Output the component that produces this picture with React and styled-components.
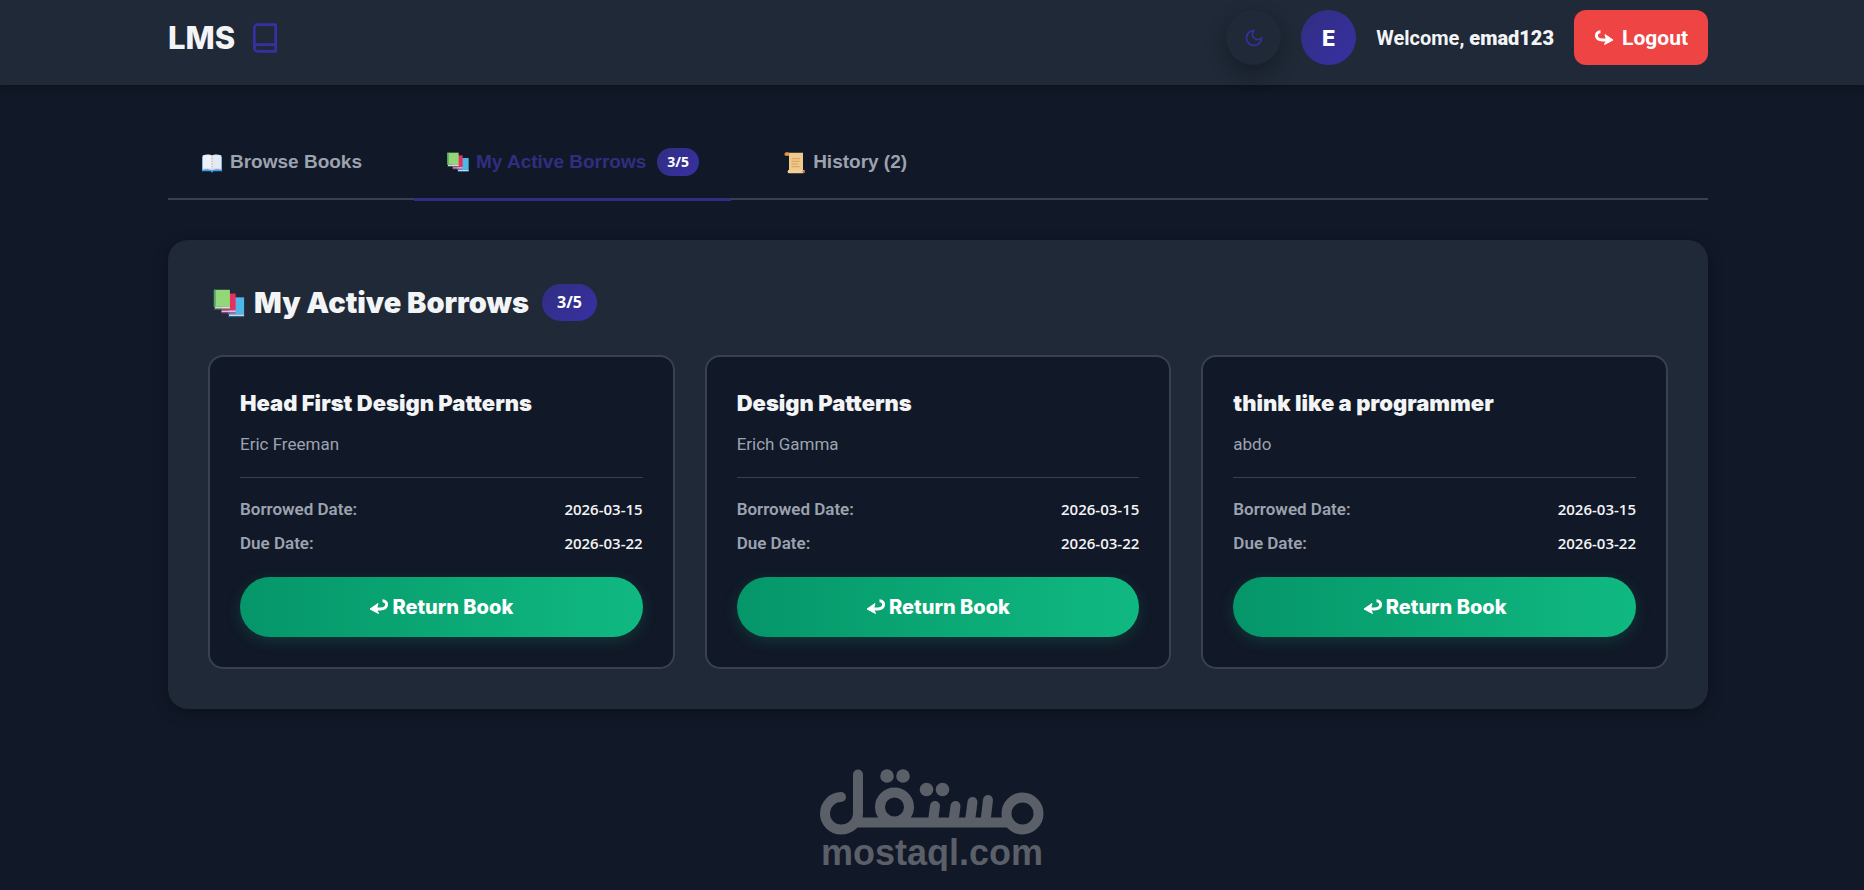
import React, { useState } from 'react'
import styled, { createGlobalStyle } from 'styled-components'

const books = [
    { title: "Head First Design Patterns", author: "Eric Freeman", borrowed: "2026-03-15", due: "2026-03-22" },
    { title: "Design Patterns", author: "Erich Gamma", borrowed: "2026-03-15", due: "2026-03-22" },
    { title: "think like a programmer", author: "abdo", borrowed: "2026-03-15", due: "2026-03-22" },
]

function BooksEmoji({size}) {
    return (
        <svg width={size} height={size} viewBox="0 0 36 36" aria-hidden="true">
            <path d="M17 12h17v18H17z" fill="#50b5e9"/>
            <path d="M17 12h2v18h-2z" fill="#2a7fc4"/>
            <path d="M18 30h16v2H18z" fill="#ccd6dd"/>
            <path d="M17 32h17v1H17z" fill="#226699"/>
            <path d="M10 8h15v18H10z" fill="#e6305f"/>
            <path d="M10 26h15v2H10z" fill="#d9c0dd"/>
            <path d="M10 28h15v1H10z" fill="#a0247c"/>
            <path d="M2 4h17v18H2z" fill="#92d878"/>
            <path d="M2 4h2v18H2z" fill="#55a36a"/>
            <path d="M3 22h16v2H3z" fill="#d5dbe0"/>
            <path d="M2 24h17v1H2z" fill="#44805a"/>
        </svg>
    )
}

function OpenBookEmoji({size}) {
    return (
        <svg width={size} height={size} viewBox="0 0 36 36" aria-hidden="true">
            <path d="M3 10h30v22H20l-2 2-2-2H3z" fill="#3b9fe0"/>
            <path d="M5 8c5-2 10-1 13 0v22c-4-2-8-2-14-1V8z" fill="#eef1f6"/>
            <path d="M31 8c-5-2-10-1-13 0v22c4-2 8-2 14-1V8z" fill="#e6e9f0"/>
            <path d="M18 8v21" stroke="#99aab5" strokeWidth="1.5" strokeDasharray="2 2"/>
            <path d="M4 29c6-1 10-1 14 1 4-2 8-2 14-1" fill="none" stroke="#ccc8e4" strokeWidth="1.5"/>
        </svg>
    )
}

function ScrollEmoji({size}) {
    return (
        <svg width={size} height={size} viewBox="0 0 36 36" aria-hidden="true">
            <path d="M5 4h25v28H9V8H5z" fill="#efca8c"/>
            <path d="M2 6c0-3 5-4 7-2v5H4c-1 0-2-1-2-3z" fill="#c07a3e"/>
            <path d="M4 6h4" stroke="#f2b75c" strokeWidth="2"/>
            <path d="M8 30h24c1 3-1 5-3 5H9c-2 0-3-3-1-5z" fill="#f2d09a"/>
            <path d="M29 31h4c1 3-1 4-3 4z" fill="#c1694f"/>
            <path d="M13 13h12M13 17h12M13 21h10M13 25h12" stroke="#d99e5c" strokeWidth="1.5"/>
        </svg>
    )
}

function HookArrow({flip}) {
    return (
        <svg width="20" height="18" viewBox="0 0 20 18" aria-hidden="true">
            <g transform={flip ? "translate(20 0) scale(-1 1)" : undefined}>
                <path d="M6 11H11.500C19.500 11 19 2.800 13.500 2.800" fill="none" stroke="currentColor" strokeWidth="3"/>
                <path d="M1 11L9 5.500L7.500 11L9.500 15.500z" fill="currentColor" stroke="currentColor" strokeWidth="1" strokeLinejoin="round"/>
            </g>
        </svg>
    )
}

function WatermarkLogo() {
    return (
        <svg width="224" height="66" viewBox="0 0 224 66" role="img" aria-label="مستقل">
            <g fill="none" stroke="currentColor" strokeWidth="10" strokeLinecap="round">
                <path d="M21 28C12 28 5 36 5 44.500C5 53 12 60.500 21 60.500C30 60.500 38 54 38 44V5.500"/>
                <circle cx="74.500" cy="38" r="14.500"/>
                <path d="M34 53.500H190" strokeLinecap="butt"/>
                <path d="M113 52l2-15M133.500 52l2-15M150 52l2.500-19M165.500 52l2.500-21"/>
                <circle cx="202.500" cy="44.500" r="16"/>
            </g>
            <g fill="currentColor">
                <circle cx="67" cy="7" r="6.800"/>
                <circle cx="83" cy="7" r="6.800"/>
                <circle cx="106.500" cy="20.500" r="6.800"/>
                <circle cx="122.500" cy="20.500" r="6.800"/>
            </g>
        </svg>
    )
}

function Header() {
    return (
        <TopBar>
            <Brand href="#">
                LMS
                <svg width="32" height="32" viewBox="0 0 24 24" fill="none" stroke="#3730a3" strokeWidth="2" strokeLinecap="round" strokeLinejoin="round" aria-hidden="true">
                    <path d="M4 19.500v-15A2.500 2.500 0 0 1 6.500 2H20v20H6.500a2.500 2.500 0 0 1 0-5H20"/>
                </svg>
            </Brand>
            <UserArea>
                <ThemeToggle aria-label="Toggle theme">
                    <svg width="20" height="20" viewBox="0 0 24 24" fill="none" stroke="currentColor" strokeWidth="2" strokeLinecap="round" strokeLinejoin="round" aria-hidden="true">
                        <path d="M12 3a6 6 0 0 0 9 9 9 9 0 1 1-9-9z"/>
                    </svg>
                </ThemeToggle>
                <Avatar>E</Avatar>
                <Welcome>Welcome, <b>emad123</b></Welcome>
                <LogoutButton><HookArrow flip/>Logout</LogoutButton>
            </UserArea>
        </TopBar>
    )
}

function BookCard({book}) {
    return (
        <Card>
            <BookTitle>{book.title}</BookTitle>
            <Author>{book.author}</Author>
            <Dates>
                <DateRow>
                    <dt>Borrowed Date:</dt>
                    <dd>{book.borrowed}</dd>
                </DateRow>
                <DateRow>
                    <dt>Due Date:</dt>
                    <dd>{book.due}</dd>
                </DateRow>
            </Dates>
            <ReturnButton><HookArrow/>Return Book</ReturnButton>
        </Card>
    )
}

function App() {
    const [tab, setTab] = useState("borrows")

    return (
        <>
            <GlobalStyle/>
            <Header/>
            <Main>
                <Tabs>
                    <Tab $active={tab==="browse"} onClick={() => setTab("browse")}>
                        <OpenBookEmoji size={24}/>
                        Browse Books
                    </Tab>
                    <Tab $active={tab==="borrows"} onClick={() => setTab("borrows")}>
                        <BooksEmoji size={24}/>
                        My Active Borrows
                        <Badge>3/5</Badge>
                    </Tab>
                    <Tab $active={tab==="history"} onClick={() => setTab("history")}>
                        <ScrollEmoji size={24}/>
                        History (2)
                    </Tab>
                </Tabs>
                <Panel>
                    <PanelTitle>
                        <BooksEmoji size={34}/>
                        My Active Borrows
                        <Badge $large>3/5</Badge>
                    </PanelTitle>
                    <Grid>
                        {books.map(book => <BookCard key={book.title} book={book}/>)}
                    </Grid>
                </Panel>
            </Main>
            <Watermark>
                <WatermarkLogo/>
                <span>mostaql.com</span>
            </Watermark>
        </>
    )
}

export default App

const GlobalStyle = createGlobalStyle`
    * {
        box-sizing: border-box;
    }

    body {
        margin: 0;
        background-color: #111827;
        color: #f3f4f6;
        font-family: Roboto, "Liberation Sans", sans-serif;
    }

    button {
        font-family: inherit;
        border: none;
        cursor: pointer;
    }
`

const TopBar = styled.header`
    display: flex;
    justify-content: space-between;
    align-items: center;
    padding: 10px 156px 20px 168px;
    background-color: #1f2937;
    box-shadow: 0 2px 10px rgba(0,0,0,0.3);
`

const Brand = styled.a`
    display: flex;
    align-items: center;
    gap: 14px;
    font-family: Inter, sans-serif;
    font-size: 31px;
    font-weight: 800;
    color: #f3f4f6;
    text-decoration: none;
`

const UserArea = styled.div`
    display: flex;
    align-items: center;
    gap: 20px;
`

const ThemeToggle = styled.button`
    display: grid;
    place-items: center;
    width: 55px;
    height: 55px;
    padding: 0;
    border-radius: 50%;
    background-color: #1f2937;
    color: #3730a3;
    box-shadow: 0 8px 20px rgba(0,0,0,0.3);
`

const Avatar = styled.div`
    display: grid;
    place-items: center;
    width: 55px;
    height: 55px;
    border-radius: 50%;
    background: linear-gradient(135deg, #312e81, #3730a3);
    color: #fff;
    font-family: Inter, sans-serif;
    font-size: 22px;
    font-weight: 800;
`

const Welcome = styled.span`
    font-size: 20px;
    font-weight: 700;
`

const LogoutButton = styled.button`
    display: flex;
    align-items: center;
    gap: 8px;
    height: 55px;
    padding: 0 20px;
    border-radius: 12px;
    background-color: #ef4444;
    color: #fff;
    font-size: 21px;
    font-weight: 700;
`

const Main = styled.main`
    padding: 40px 156px 0 168px;
`

const Tabs = styled.nav`
    display: flex;
    gap: 20px;
    margin-bottom: 40px;
    border-bottom: 2px solid #374151;
`

const Tab = styled.button`
    display: flex;
    align-items: center;
    gap: 6px;
    height: 76px;
    margin-bottom: -3px;
    padding: 0 32px;
    background: none;
    border-bottom: 3px solid ${({$active}) => $active ? "#312e81" : "transparent"};
    color: ${({$active}) => $active ? "#312e81" : "#9ca3af"};
    font-family: "Liberation Sans", Arial, sans-serif;
    font-size: 19px;
    font-weight: 700;
`

const Badge = styled.span`
    margin-left: 5px;
    padding: ${({$large}) => $large ? "0 15px" : "0 10px"};
    border-radius: 20px;
    background: linear-gradient(135deg, #312e81, #3730a3);
    color: #fff;
    font-family: "Open Sans", sans-serif;
    font-size: ${({$large}) => $large ? "16px" : "14px"};
    font-weight: 700;
    line-height: ${({$large}) => $large ? "37px" : "28px"};
`

const Panel = styled.section`
    padding: 40px;
    border-radius: 20px;
    background-color: #1f2937;
    box-shadow: 0 4px 15px rgba(0,0,0,0.3);
`

const PanelTitle = styled.h2`
    display: flex;
    align-items: center;
    gap: 8px;
    height: 45px;
    margin: 0 0 30px;
    padding-left: 4px;
    font-family: Inter, sans-serif;
    font-size: 29px;
    font-weight: 900;
`

const Grid = styled.div`
    display: grid;
    grid-template-columns: repeat(3, 1fr);
    gap: 30px;
`

const Card = styled.article`
    padding: 30px;
    border: 2px solid #374151;
    border-radius: 15px;
    background-color: #111827;
`

const BookTitle = styled.h3`
    margin: 0 0 12px;
    font-family: Inter, sans-serif;
    font-size: 22px;
    font-weight: 900;
    line-height: 32px;
`

const Author = styled.p`
    margin: 0 0 20px;
    color: #9ca3af;
    font-size: 17px;
    line-height: 26px;
`

const Dates = styled.dl`
    display: grid;
    gap: 10px;
    margin: 0 0 22px;
    padding-top: 19px;
    border-top: 1px solid #374151;
`

const DateRow = styled.div`
    display: flex;
    justify-content: space-between;
    line-height: 24px;

    dt {
        color: #9ca3af;
        font-size: 17px;
        font-weight: 600;
    }

    dd {
        margin: 0;
        font-family: "Open Sans", sans-serif;
        font-size: 15px;
        font-weight: 600;
    }
`

const ReturnButton = styled.button`
    display: flex;
    justify-content: center;
    align-items: center;
    gap: 3px;
    width: 100%;
    height: 60px;
    padding: 0;
    border-radius: 30px;
    background: linear-gradient(90deg, #059669, #10b981);
    color: #fff;
    box-shadow: 0 4px 15px rgba(16,185,129,0.2);
    font-family: Inter, sans-serif;
    font-size: 20px;
    font-weight: 800;
`

const Watermark = styled.footer`
    display: flex;
    flex-direction: column;
    align-items: center;
    padding-top: 60px;
    color: #5b5f68;
    font-family: "Liberation Sans", sans-serif;
    font-size: 36px;
    font-weight: 700;
    line-height: 36px;
`
